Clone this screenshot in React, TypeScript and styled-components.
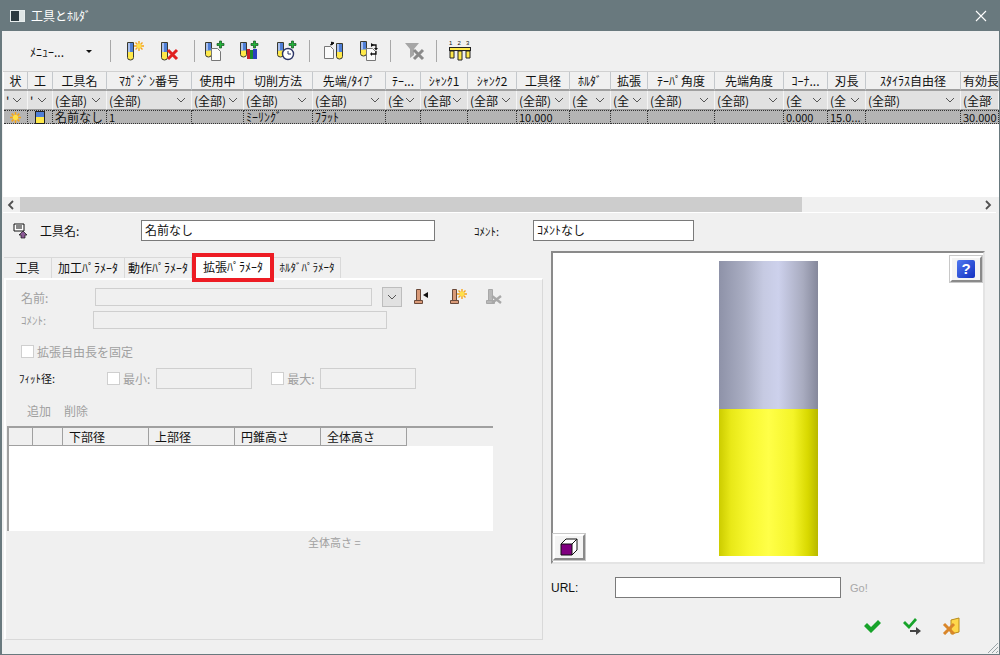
import React from "react";
import styled, { createGlobalStyle } from "styled-components";

const GlobalStyle = createGlobalStyle`
  html, body {
    margin: 0;
    padding: 0;
    background: #f0f0f0;
  }
  body {
    font-family: "Noto Sans CJK JP", "Liberation Sans", sans-serif;
    font-size: 12px;
    color: #111;
    overflow: hidden;
  }
`;

type Column = {
  title: string;
  width: number;
  filter: string;
  value?: string;
  kana?: boolean;
};

const columns: Column[] = [
  { title: "状", width: 24, filter: "" },
  { title: "工", width: 25, filter: "" },
  { title: "工具名", width: 54, filter: "(全部)", value: "名前なし", kana: true },
  { title: "ﾏｶﾞｼﾞﾝ番号", width: 85, filter: "(全部)", value: "1" },
  { title: "使用中", width: 52, filter: "(全部)" },
  { title: "切削方法", width: 69, filter: "(全部)", value: "ﾐｰﾘﾝｸﾞ", kana: true },
  { title: "先端/ﾀｲﾌﾟ", width: 73, filter: "(全部)", value: "ﾌﾗｯﾄ", kana: true },
  { title: "ﾃｰ...", width: 35, filter: "(全" },
  { title: "ｼｬﾝｸ1", width: 47, filter: "(全部" },
  { title: "ｼｬﾝｸ2", width: 49, filter: "(全部" },
  { title: "工具径", width: 53, filter: "(全部)", value: "10.000" },
  { title: "ﾎﾙﾀﾞ", width: 41, filter: "(全" },
  { title: "拡張", width: 37, filter: "(全" },
  { title: "ﾃｰﾊﾟ角度", width: 67, filter: "(全部)" },
  { title: "先端角度", width: 69, filter: "(全部)" },
  { title: "ｺｰﾅ...", width: 44, filter: "(全" },
  { title: "刃長", width: 38, filter: "(全", value: "15.0..." },
  { title: "ｽﾀｲﾗｽ自由径", width: 95, filter: "(全部)" },
  { title: "有効長", width: 38, filter: "(全部", value: "30.000" },
];

const gridTemplate = columns.map((c) => `${c.width}px`).join(" ");

const Tube = ({ x = 0, y = 0, h = 16 }: { x?: number; y?: number; h?: number }) => (
  <g transform={`translate(${x} ${y})`}>
    <path
      d={`M0.5 0.5h6v${h - 3}a3 2.5 0 0 1-6 0z`}
      fill="#ffe94a"
      stroke="#3a3a30"
    />
    <rect x="1" y="1" width="5" height={h * 0.5} fill="#4f7fd6" />
    <rect x="1" y="1" width="2" height={h * 0.5} fill="#a9c0ee" />
  </g>
);

const Spark = ({ x, y }: { x: number; y: number }) => (
  <g transform={`translate(${x} ${y})`} stroke="#f5a31a" strokeWidth="1.4">
    <path d="M5 0v10M0 5h10M1.500 1.500l7 7M8.500 1.500l-7 7" />
    <circle cx="5" cy="5" r="2.400" fill="#ffe14a" stroke="none" />
  </g>
);

const Plus = ({ x, y }: { x: number; y: number }) => (
  <path
    transform={`translate(${x} ${y})`}
    d="M2.500 0h2v2.500H7v2H4.500V7h-2V4.500H0v-2h2.500z"
    fill="#22b53a"
    stroke="#124d1c"
    strokeWidth="0.7"
  />
);

const Page = ({ x, y }: { x: number; y: number }) => (
  <path
    transform={`translate(${x} ${y})`}
    d="M0.500 0.500h6l3 3v9h-9z"
    fill="#fbfbfb"
    stroke="#777"
  />
);

const Icon = styled.svg.attrs({ viewBox: "0 0 24 24", width: 24, height: 24 })`
  display: block;
`;

const NewToolIcon = () => (
  <Icon>
    <Tube x={4} y={3} h={18} />
    <Spark x={11} y={2} />
  </Icon>
);

const DeleteToolIcon = () => (
  <Icon>
    <Tube x={2} y={3} h={18} />
    <path d="M9 11l9 9M18 11l-9 9" stroke="#e02020" strokeWidth="3" />
  </Icon>
);

const AddFileIcon = () => (
  <Icon>
    <Tube x={3} y={3} h={15} />
    <Page x={9} y={9} />
    <Plus x={15} y={2} />
  </Icon>
);

const AddColorIcon = () => (
  <Icon>
    <Tube x={2} y={3} h={15} />
    <rect x="9" y="10" width="3" height="10" fill="#c8202a" />
    <rect x="12" y="11" width="3" height="9" fill="#1c8a30" />
    <rect x="15" y="10" width="4" height="10" fill="#2a3fc0" />
    <Plus x={13} y={2} />
  </Icon>
);

const AddClockIcon = () => (
  <Icon>
    <Tube x={3} y={3} h={15} />
    <circle cx="14" cy="15" r="5.500" fill="#fff" stroke="#2c3566" strokeWidth="1.400" />
    <path d="M14 12v3h3" fill="none" stroke="#2c3566" />
    <Plus x={15} y={2} />
  </Icon>
);

const ExportIcon = () => (
  <Icon>
    <Page x={3} y={7} />
    <path d="M9 6l4-2M13 4l-2.500-1v3z" stroke="#111" fill="#111" />
    <Tube x={15} y={4} h={16} />
  </Icon>
);

const SwapIcon = () => (
  <Icon>
    <Tube x={3} y={2} h={15} />
    <Page x={9} y={9} />
    <path d="M14 6h5v3M19 12v3h-4" fill="none" stroke="#111" strokeWidth="1.300" />
    <path d="M17 9h4l-2 2.500zM17 6l-3-2v4zM15 13v4l-2-2z" fill="#111" />
  </Icon>
);

const ClearFilterIcon = () => (
  <Icon>
    <path d="M2 4h14l-5 6v6l-4 3v-9z" fill="#a6a6a6" />
    <path d="M11 11l9 9M20 11l-9 9" stroke="#8a8a8a" strokeWidth="3" />
  </Icon>
);

const ColumnsIcon = () => (
  <Icon>
    <text x="1" y="6" fontSize="6" fontFamily="Liberation Sans" fill="#111">1</text>
    <text x="9.500" y="6" fontSize="6" fontFamily="Liberation Sans" fill="#111">2</text>
    <text x="18" y="6" fontSize="6" fontFamily="Liberation Sans" fill="#111">3</text>
    <rect x="1.500" y="8.500" width="21" height="3" fill="#ffe94a" stroke="#222" />
    <path d="M2 12h4v7H2zM10 12h4v9h-4zM18 12h4v7h-4z" fill="#ffe94a" stroke="#222" />
  </Icon>
);

const SmallIcon = styled.svg.attrs({ viewBox: "0 0 18 18", width: 18, height: 18 })`
  display: block;
`;

const BitIcon = ({ tint = "#d99a78", edge = "#6b4a3a", children }: { tint?: string; edge?: string; children?: React.ReactNode }) => (
  <SmallIcon>
    <path d="M3.500 1.500h4v11h-4z" fill={tint} stroke={edge} />
    <path d="M1.500 12.500h8v3h-8z" fill={tint} stroke={edge} />
    {children}
  </SmallIcon>
);

const CubeIcon = () => (
  <svg width="20" height="20" viewBox="0 0 20 20">
    <path d="M2 7L7 2h11v11l-5 5" fill="#fff" stroke="#111" />
    <path d="M2 7h11v11H2z" fill="#800080" stroke="#111" />
    <path d="M13 7l5-5" stroke="#111" />
  </svg>
);

const Window = styled.div`
  width: 1000px;
  height: 655px;
  box-sizing: border-box;
  display: flex;
  flex-direction: column;
  background: #f0f0f0;
  border: solid #69797e;
  border-width: 0 1px 1px 2px;
  position: relative;
  overflow: hidden;
`;

const TitleBar = styled.div`
  height: 31px;
  flex: none;
  margin-left: -2px;
  margin-right: -1px;
  padding: 0 13px 0 10px;
  display: flex;
  align-items: center;
  gap: 6px;
  background: #69797e;
  color: #fff;
  font-size: 12px;
`;

const AppGlyph = styled.span`
  width: 13px;
  height: 10px;
  border: 1px solid #e8eeee;
  background: linear-gradient(90deg, #2c3a40 0 60%, #dfe6e6 60% 100%);
`;

const CloseButton = styled.svg.attrs({ viewBox: "0 0 12 12", width: 12, height: 12 })`
  margin-left: auto;
  stroke: #fff;
  stroke-width: 1.1;
`;

const Toolbar = styled.div`
  height: 40px;
  flex: none;
  display: flex;
  align-items: center;
`;

const MenuButton = styled.div`
  width: 108px;
  box-sizing: border-box;
  padding: 0 18px 0 28px;
  display: flex;
  align-items: center;
  justify-content: space-between;
  font-size: 12px;
`;

const MenuCaret = styled.span`
  width: 0;
  height: 0;
  border: 3px solid transparent;
  border-top: 3px solid #111;
  border-bottom: 0;
`;

const ToolSep = styled.span<{ $left: number; $right: number }>`
  width: 1px;
  height: 22px;
  background: #a8a8a8;
  margin: 0 ${(p) => p.$right}px 0 ${(p) => p.$left}px;
`;

const ToolButton = styled.div`
  width: 36px;
  display: flex;
  justify-content: center;
`;

const GridFrame = styled.div`
  height: 126px;
  flex: none;
  margin-left: 1px;
  background: #fff;
  overflow: hidden;
  display: flex;
  flex-direction: column;
  border-top: 1px solid #d0d0d0;
  box-sizing: border-box;
`;

const GridRow = styled.div`
  display: grid;
  grid-template-columns: ${gridTemplate};
  margin-left: 1px;
  width: max-content;
`;

const HeadCell = styled.div`
  height: 19px;
  box-sizing: border-box;
  padding: 0 2px;
  background: #f0f0f0;
  border-right: 1px solid #c4c8cc;
  border-bottom: 2px solid #a0a0a0;
  text-align: center;
  line-height: 17px;
  font-size: 12px;
  white-space: nowrap;
  overflow: hidden;
`;

const FilterCell = styled.div`
  height: 19px;
  box-sizing: border-box;
  padding: 0 3px 0 2px;
  display: flex;
  align-items: center;
  justify-content: space-between;
  background: #e1e1e1;
  border-right: 1px solid #f4f4f4;
  border-bottom: 1px solid #9a9a9a;
  font-size: 12px;
  overflow: hidden;
`;

const FilterText = styled.span`
  white-space: nowrap;
  flex: 1;
  min-width: 0;
`;

const Chevron = styled.svg.attrs({ viewBox: "0 0 10 6", width: 10, height: 6 })`
  flex: none;
  margin: 0 2px;
  fill: none;
  stroke: #555;
`;

const DataCell = styled.div<{ $kana?: boolean; $center?: boolean }>`
  height: 14px;
  box-sizing: border-box;
  padding-left: ${(p) => (p.$center ? 0 : 2)}px;
  background: #b4b4b4;
  border: 1px dotted #333;
  border-left: 0;
  display: flex;
  align-items: center;
  justify-content: ${(p) => (p.$center ? "center" : "flex-start")};
  font-size: ${(p) => (p.$kana ? 12 : 11)}px;
  line-height: 12px;
  white-space: nowrap;
`;

const ScrollBar = styled.div`
  height: 15px;
  flex: none;
  margin: 0 3px 0 1px;
  display: flex;
  align-items: center;
  background: #f0f0f0;
  box-shadow: 0 1px 0 #fff;
`;

const ScrollArrow = styled.svg.attrs({ viewBox: "0 0 8 10", width: 8, height: 10 })`
  flex: none;
  fill: none;
  stroke: #505050;
  stroke-width: 1.8;
`;

const ScrollBack = styled(ScrollArrow)`
  margin: 0 5px 0 4px;
`;

const ScrollForward = styled(ScrollArrow)`
  margin: 0 4px 0 auto;
`;

const ScrollThumb = styled.div`
  width: 782px;
  height: 15px;
  background: #cdcdcd;
`;

const NameRow = styled.div`
  height: 45px;
  flex: none;
  display: flex;
  align-items: center;
  padding: 0 0 8px 0;
  box-sizing: border-box;
`;

const NameGlyph = styled.svg.attrs({ viewBox: "0 0 16 16", width: 16, height: 16 })`
  margin: 0 11px 0 11px;
`;

const NameLabel = styled.span`
  width: 101px;
`;

const TextBox = styled.div<{ $width: number }>`
  width: ${(p) => p.$width}px;
  height: 21px;
  flex: none;
  box-sizing: border-box;
  padding-left: 3px;
  border: 1px solid #7a7a7a;
  background: #fff;
  line-height: 18px;
  white-space: nowrap;
`;

const CommentLabel = styled.span`
  width: 59px;
  margin-left: 39px;
  font-size: 11px;
`;

const Main = styled.div`
  flex: 1;
  display: flex;
  min-height: 0;
`;

const LeftColumn = styled.div`
  width: 539px;
  margin-left: 2px;
  display: flex;
  flex-direction: column;
`;

const TabStrip = styled.div`
  height: 21px;
  display: flex;
  flex: none;
  position: relative;
`;

const Tab = styled.div<{ $width: number; $active?: boolean; $small?: boolean }>`
  width: ${(p) => p.$width}px;
  box-sizing: border-box;
  text-align: center;
  white-space: nowrap;
  line-height: 19px;
  font-size: ${(p) => (p.$small ? 11 : 12)}px;
  background: ${(p) => (p.$active ? "#fff" : "#f0f0f0")};
  border: 1px solid #d9d9d9;
  border-bottom: 0;
  border-left: 0;
  overflow: hidden;
`;

const HighlightTab = styled(Tab)`
  position: relative;
  z-index: 1;
  margin: 0 4px;
  border: 0;
  outline: 4px solid #ed1c24;
`;

const Panel = styled.div`
  height: 362px;
  box-sizing: border-box;
  border: 1px solid #d9d9d9;
  border-top: 2px solid #fff;
  border-left: 2px solid #fff;
  padding: 7px 0 0 2px;
  color: #a0a0a0;
`;

const FieldRow = styled.div<{ $height: number }>`
  display: flex;
  align-items: center;
  height: ${(p) => p.$height}px;
`;

const FieldLabel = styled.span<{ $width: number }>`
  width: ${(p) => p.$width}px;
  flex: none;
  padding-left: 13px;
  box-sizing: border-box;
`;

const SmallFieldLabel = styled(FieldLabel)`
  font-size: 11px;
`;

const FitLabel = styled(SmallFieldLabel)`
  color: #111;
  padding-left: 11px;
`;

const DisabledBox = styled.div<{ $width: number; $height?: number; $left?: number }>`
  width: ${(p) => p.$width}px;
  height: ${(p) => p.$height ?? 18}px;
  margin-left: ${(p) => p.$left ?? 0}px;
  flex: none;
  box-sizing: border-box;
  border: 1px solid #cfcfcf;
  background: #f0f0f0;
`;

const DropButton = styled.div`
  width: 20px;
  height: 20px;
  margin: 0 11px 0 10px;
  border: 1px solid #bdbdbd;
  background: #e1e1e1;
  display: flex;
  align-items: center;
  justify-content: center;
  box-sizing: border-box;
`;

const IconSlot = styled.div`
  width: 36px;
  display: flex;
  justify-content: flex-start;
  box-sizing: border-box;
`;

const CheckBox = styled.span<{ $left?: number }>`
  width: 13px;
  height: 13px;
  flex: none;
  box-sizing: border-box;
  border: 1px solid #cfcfcf;
  background: #fff;
  margin: 0 3px 0 ${(p) => p.$left ?? 0}px;
`;

const ActionRow = styled.div`
  display: flex;
  gap: 13px;
  padding-left: 19px;
  height: 32px;
  align-items: center;
  box-sizing: border-box;
`;

const PartsTable = styled.div`
  width: 486px;
  height: 105px;
  margin-left: -1px;
  box-sizing: border-box;
  background: #fff;
  border-top: 2px solid #a0a0a0;
  border-left: 2px solid #a0a0a0;
  display: flex;
  flex-direction: column;
`;

const PartsHead = styled.div`
  height: 18px;
  flex: none;
  display: flex;
  background: #f0f0f0;
  color: #111;
`;

const PartsCell = styled.div<{ $width: number }>`
  width: ${(p) => p.$width}px;
  box-sizing: border-box;
  padding-left: 6px;
  border-right: 1px solid #a0a0a0;
  border-bottom: 1px solid #a0a0a0;
  line-height: 17px;
`;

const TotalHeight = styled.div`
  padding: 3px 0 0 300px;
  font-size: 11px;
`;

const RightColumn = styled.div`
  width: 434px;
  margin: -6px 0 0 8px;
  display: flex;
  flex-direction: column;
`;

const Preview = styled.div`
  height: 313px;
  flex: none;
  box-sizing: border-box;
  position: relative;
  background: #fff;
  border: 2px solid #e4e4e4;
  border-top-color: #8a8a8a;
  border-left-color: #8a8a8a;
  padding-top: 8px;
  display: flex;
  flex-direction: column;
  align-items: center;
`;

const Shank = styled.div`
  width: 99px;
  height: 148px;
  flex: none;
  background: linear-gradient(90deg, #8e92a8 0%, #a9adc2 25%, #c6cae2 45%, #cdd1ec 60%, #a8abbf 85%, #85889b 100%);
`;

const Holder = styled.div`
  width: 99px;
  height: 147px;
  flex: none;
  background: linear-gradient(90deg, #cccc00 0%, #e8e818 12%, #f8f830 30%, #ffff48 50%, #f4f428 75%, #d8d800 90%, #b8b800 100%);
`;

const RaisedButton = styled.div`
  position: absolute;
  box-sizing: border-box;
  background: #f4f4f4;
  border: 2px solid;
  border-color: #fff #8a8a8a #8a8a8a #fff;
  outline: 1px solid #c8c8c8;
  display: flex;
  align-items: center;
  justify-content: center;
`;

const HelpButton = styled(RaisedButton)`
  top: 3px;
  right: 1px;
  width: 32px;
  height: 26px;
`;

const ViewButton = styled(RaisedButton)`
  left: 0;
  bottom: 2px;
  width: 32px;
  height: 26px;
`;

const HelpFace = styled.span`
  width: 18px;
  height: 18px;
  border-radius: 2px;
  background: linear-gradient(135deg, #4f78f0, #1230c0);
  color: #fff;
  font: bold 15px/18px "Liberation Sans", sans-serif;
  text-align: center;
`;

const UrlRow = styled.div`
  display: flex;
  align-items: center;
  margin-top: 13px;
`;

const UrlLabel = styled.span`
  width: 64px;
  font-family: "Liberation Sans", sans-serif;
  font-size: 12px;
`;

const GoLabel = styled.span`
  margin-left: 9px;
  color: #a8a8a8;
  font-family: "Liberation Sans", sans-serif;
  font-size: 11px;
`;

const DialogActions = styled.div`
  display: flex;
  justify-content: flex-end;
  gap: 18px;
  margin-top: 19px;
  padding-right: 22px;
`;

const Grip = styled.svg.attrs({ viewBox: "0 0 12 12", width: 12, height: 12 })`
  position: absolute;
  right: 0;
  bottom: 0;
  stroke: #9aa4a8;
`;

const tabs = [
  { label: "工具", width: 48 },
  { label: "加工ﾊﾟﾗﾒｰﾀ", width: 73 },
  { label: "動作ﾊﾟﾗﾒｰﾀ", width: 67 },
];

const chevron = (
  <Chevron>
    <path d="M1 1l4 4 4-4" />
  </Chevron>
);

export default function App() {
  return (
    <Window>
      <GlobalStyle />
      <TitleBar>
        <AppGlyph />
        <span>工具とﾎﾙﾀﾞ</span>
        <CloseButton>
          <path d="M1 1l10 10M11 1L1 11" />
        </CloseButton>
      </TitleBar>

      <Toolbar>
        <MenuButton>
          <span>ﾒﾆｭｰ...</span>
          <MenuCaret />
        </MenuButton>
        <ToolSep $left={0} $right={6} />
        <ToolButton><NewToolIcon /></ToolButton>
        <ToolButton><DeleteToolIcon /></ToolButton>
        <ToolSep $left={5} $right={1} />
        <ToolButton><AddFileIcon /></ToolButton>
        <ToolButton><AddColorIcon /></ToolButton>
        <ToolButton><AddClockIcon /></ToolButton>
        <ToolSep $left={5} $right={5} />
        <ToolButton><ExportIcon /></ToolButton>
        <ToolButton><SwapIcon /></ToolButton>
        <ToolSep $left={3} $right={6} />
        <ToolButton><ClearFilterIcon /></ToolButton>
        <ToolSep $left={3} $right={5} />
        <ToolButton><ColumnsIcon /></ToolButton>
      </Toolbar>

      <GridFrame>
        <GridRow>
          {columns.map((c) => (
            <HeadCell key={c.title}>{c.title}</HeadCell>
          ))}
        </GridRow>
        <GridRow>
          {columns.map((c) => (
            <FilterCell key={c.title}>
              <FilterText>{c.filter || "'"}</FilterText>
              {chevron}
            </FilterCell>
          ))}
        </GridRow>
        <GridRow>
          {columns.map((c, i) => (
            <DataCell key={c.title} $kana={c.kana} $center={i < 2}>
              {i === 0 && (
                <svg width="11" height="11" viewBox="0 0 10 10">
                  <Spark x={0} y={0} />
                </svg>
              )}
              {i === 1 && (
                <svg width="11" height="13" viewBox="0 0 11 13">
                  <rect x="0.500" y="0.500" width="9" height="12" fill="#ffe94a" stroke="#222" />
                  <rect x="1" y="1" width="8" height="5" fill="#4f7fd6" />
                </svg>
              )}
              {c.title === "ｺｰﾅ..." ? "0.000" : c.value}
            </DataCell>
          ))}
        </GridRow>
      </GridFrame>
      <ScrollBar>
        <ScrollBack>
          <path d="M6 1L2 5l4 4" />
        </ScrollBack>
        <ScrollThumb />
        <ScrollForward>
          <path d="M2 1l4 4-4 4" />
        </ScrollForward>
      </ScrollBar>

      <NameRow>
        <NameGlyph>
          <path d="M1 1h10v7H1z" fill="#fff" stroke="#111" />
          <path d="M3 3h6M3 5h6" stroke="#111" />
          <path d="M6 12l4-4 4 4h-2v3H8v-3z" fill="#8b5a96" stroke="#111" strokeWidth="0.7" />
        </NameGlyph>
        <NameLabel>工具名:</NameLabel>
        <TextBox $width={294}>名前なし</TextBox>
        <CommentLabel>ｺﾒﾝﾄ:</CommentLabel>
        <TextBox $width={161}>ｺﾒﾝﾄなし</TextBox>
      </NameRow>

      <Main>
        <LeftColumn>
          <TabStrip>
            {tabs.map((t) => (
              <Tab key={t.label} $width={t.width}>{t.label}</Tab>
            ))}
            <HighlightTab $width={74} $active>拡張ﾊﾟﾗﾒｰﾀ</HighlightTab>
            <Tab $width={67} $small>ﾎﾙﾀﾞﾊﾟﾗﾒｰﾀ</Tab>
          </TabStrip>
          <Panel>
            <FieldRow $height={20}>
              <FieldLabel $width={87}>名前:</FieldLabel>
              <DisabledBox $width={277} />
              <DropButton>{chevron}</DropButton>
              <IconSlot>
                <BitIcon>
                  <path d="M10 7l5-3v6z" fill="#111" />
                </BitIcon>
              </IconSlot>
              <IconSlot>
                <BitIcon>
                  <Spark x={8} y={1} />
                </BitIcon>
              </IconSlot>
              <IconSlot>
                <BitIcon tint="#b8b8b8" edge="#a8a8a8">
                  <path d="M7 8l9 7M16 8l-9 7" stroke="#a8a8a8" strokeWidth="2.400" />
                </BitIcon>
              </IconSlot>
            </FieldRow>
            <FieldRow $height={26}>
              <SmallFieldLabel $width={85}>ｺﾒﾝﾄ:</SmallFieldLabel>
              <DisabledBox $width={294} />
            </FieldRow>
            <FieldRow $height={36}>
              <CheckBox $left={13} />
              <span>拡張自由長を固定</span>
            </FieldRow>
            <FieldRow $height={18}>
              <FitLabel $width={99}>ﾌｨｯﾄ径:</FitLabel>
              <CheckBox />
              <span>最小:</span>
              <DisabledBox $width={96} $height={21} $left={6} />
              <CheckBox $left={19} />
              <span>最大:</span>
              <DisabledBox $width={96} $height={21} $left={5} />
            </FieldRow>
            <FieldRow $height={7} />
            <ActionRow>
              <span>追加</span>
              <span>削除</span>
            </ActionRow>
            <PartsTable>
              <PartsHead>
                <PartsCell $width={24} />
                <PartsCell $width={30} />
                <PartsCell $width={86}>下部径</PartsCell>
                <PartsCell $width={86}>上部径</PartsCell>
                <PartsCell $width={86}>円錐高さ</PartsCell>
                <PartsCell $width={86}>全体高さ</PartsCell>
              </PartsHead>
            </PartsTable>
            <TotalHeight>全体高さ =</TotalHeight>
          </Panel>
        </LeftColumn>

        <RightColumn>
          <Preview>
            <Shank />
            <Holder />
            <HelpButton><HelpFace>?</HelpFace></HelpButton>
            <ViewButton><CubeIcon /></ViewButton>
          </Preview>
          <UrlRow>
            <UrlLabel>URL:</UrlLabel>
            <TextBox $width={226} />
            <GoLabel>Go!</GoLabel>
          </UrlRow>
          <DialogActions>
            <svg width="22" height="18" viewBox="0 0 22 18">
              <path d="M3 9l3-3 4 4 7-7 3 3-10 10z" fill="#17a32a" />
            </svg>
            <svg width="22" height="18" viewBox="0 0 22 18">
              <path d="M2 6l2-2 4 4 6-7 2 2-8 9z" fill="#17a32a" />
              <path d="M9 13h6v-3l5 4-5 4v-3H9z" fill="#444" />
            </svg>
            <svg width="22" height="18" viewBox="0 0 22 18">
              <path d="M10 3l8-2v14l-8 2z" fill="#ffd84a" stroke="#b88a1a" />
              <path d="M3 7l10 10M13 7L3 17" stroke="#d9862a" strokeWidth="3" />
            </svg>
          </DialogActions>
        </RightColumn>
      </Main>
      <Grip>
        <path d="M1 11L11 1M5 11l6-6M9 11l2-2" />
      </Grip>
    </Window>
  );
}
